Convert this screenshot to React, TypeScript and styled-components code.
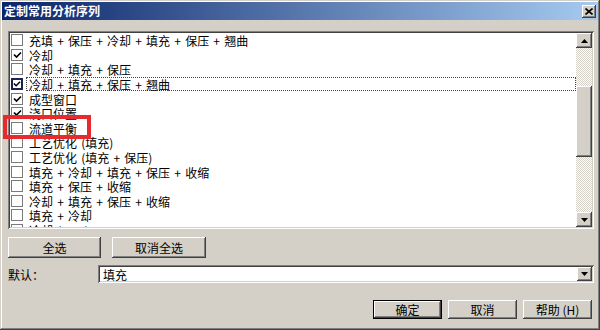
import React from "react";
import styled, { createGlobalStyle } from "styled-components";

const Global = createGlobalStyle`
  html, body { margin: 0; padding: 0; background: #d4d0c8; }
  body {
    font-family: "Noto Sans CJK SC", "Liberation Sans", sans-serif;
    font-size: 12px;
    color: #000;
  }
  * { box-sizing: border-box; }
`;

const raised =
  "inset -1px -1px #404040, inset 1px 1px #ffffff, inset -2px -2px #808080, inset 2px 2px #d4d0c8";
const sunken =
  "inset 1px 1px #808080, inset -1px -1px #ffffff, inset 2px 2px #404040, inset -2px -2px #d4d0c8";

const Window = styled.div`
  position: relative;
  width: 600px;
  height: 330px;
  background: #d4d0c8;
  padding: 2px;
  box-shadow: inset -1px -1px #404040, inset 1px 1px #d4d0c8,
    inset -2px -2px #808080, inset 2px 2px #ffffff;
  display: flex;
  flex-direction: column;
`;

const TitleBar = styled.div`
  height: 18px;
  flex: none;
  background: linear-gradient(to right, #0a246a, #a6caf0);
  display: flex;
  align-items: center;
  justify-content: space-between;
  padding: 0 2px 0 2px;
`;

const Title = styled.span`
  color: #ffffff;
  font-weight: bold;
  font-size: 12px;
  line-height: 18px;
`;

const CloseBtn = styled.div`
  width: 14px;
  height: 13px;
  background: #d4d0c8;
  box-shadow: ${raised};
  display: flex;
  align-items: center;
  justify-content: center;
`;

const Body = styled.div`
  flex: 1;
  display: flex;
  flex-direction: column;
  padding: 11px 4px 0 6px;
`;

const ListBox = styled.div`
  height: 198px;
  flex: none;
  display: flex;
  background: #ffffff;
  padding: 2px;
  box-shadow: ${sunken};
`;

const Items = styled.div`
  flex: 1;
  overflow: hidden;
  display: flex;
  flex-direction: column;
`;

const Row = styled.div`
  height: 14.6px;
  flex: none;
  display: flex;
  align-items: center;
`;

const Check = styled.span<{ $focus?: boolean }>`
  width: 12px;
  height: 12px;
  flex: none;
  margin-left: 1px;
  background: #ffffff;
  border: ${(p) => (p.$focus ? "2px solid #1a2350" : "1px solid #7a7a7a")};
  display: flex;
  align-items: center;
  justify-content: center;
`;

const Label = styled.span<{ $focus?: boolean }>`
  flex: 1;
  margin-left: 3px;
  height: 14px;
  padding-left: 2px;
  line-height: 13px;
  font-size: 12px;
  white-space: pre;
  word-spacing: 1.5px;
  border: 1px dotted ${(p) => (p.$focus ? "#444" : "transparent")};
`;

const ScrollBar = styled.div`
  width: 16px;
  flex: none;
  display: flex;
  flex-direction: column;
  background: repeating-conic-gradient(#d4d0c8 0 25%, #ffffff 0 50%) 0 0 / 2px 2px;
`;

const ScrollBtn = styled.div`
  height: 15px;
  flex: none;
  background: #d4d0c8;
  box-shadow: ${raised};
  display: flex;
  align-items: center;
  justify-content: center;
`;

const Track = styled.div`
  flex: 1;
  padding-top: 38px;
`;

const Thumb = styled.div`
  height: 71px;
  background: #d4d0c8;
  box-shadow: ${raised};
`;

const ButtonRow = styled.div`
  display: flex;
  gap: 11px;
  margin-top: 8px;
`;

const Btn = styled.div<{ $w: number; $h: number; $default?: boolean }>`
  width: ${(p) => p.$w}px;
  height: ${(p) => p.$h}px;
  background: #d4d0c8;
  box-shadow: ${(p) =>
    p.$default
      ? "inset 0 0 0 1px #000000, inset -2px -2px #404040, inset 2px 2px #ffffff, inset -3px -3px #808080"
      : raised};
  display: flex;
  align-items: center;
  justify-content: center;
  font-size: 12px;
  line-height: 1;
`;

const DefaultRow = styled.div`
  display: flex;
  align-items: center;
  margin-top: 7px;
`;

const FieldLabel = styled.span`
  width: 90px;
  flex: none;
  font-size: 12px;
`;

const Combo = styled.div`
  flex: 1;
  height: 18px;
  background: #ffffff;
  box-shadow: ${sunken};
  padding: 2px 2px 2px 5px;
  display: flex;
  align-items: center;
  justify-content: space-between;
  font-size: 12px;
`;

const DropBtn = styled.div`
  width: 15px;
  height: 14px;
  background: #d4d0c8;
  box-shadow: ${raised};
  display: flex;
  align-items: center;
  justify-content: center;
`;

const Footer = styled.div`
  display: flex;
  justify-content: flex-end;
  gap: 6px;
  margin-top: 17px;
  margin-right: 2px;
`;

const Annotation = styled.div`
  position: absolute;
  left: 3px;
  top: 115px;
  width: 88px;
  height: 24px;
  border: 4px solid #e62a2e;
  pointer-events: none;
`;

const ArrowUp = () => (
  <svg width="7" height="4" viewBox="0 0 7 4">
    <path d="M3.5 0 L7 4 L0 4 Z" fill="#000" />
  </svg>
);
const ArrowDown = () => (
  <svg width="7" height="4" viewBox="0 0 7 4">
    <path d="M0 0 L7 0 L3.5 4 Z" fill="#000" />
  </svg>
);

const CheckMark = () => (
  <svg width="9" height="8" viewBox="0 0 9 8">
    <path d="M1 3.5 L3.5 6 L8 1.5" stroke="#000" strokeWidth="1.7" fill="none" />
  </svg>
);

const CloseX = () => (
  <svg width="8" height="7" viewBox="0 0 8 7">
    <path d="M0.5 0.5 L7.5 6.5 M7.5 0.5 L0.5 6.5" stroke="#000" strokeWidth="1.6" />
  </svg>
);

const items: { text: string; checked: boolean; focus?: boolean }[] = [
  { text: "充填 + 保压 + 冷却 + 填充 + 保压 + 翘曲", checked: false },
  { text: "冷却", checked: true },
  { text: "冷却 + 填充 + 保压", checked: false },
  { text: "冷却 + 填充 + 保压 + 翘曲", checked: true, focus: true },
  { text: "成型窗口", checked: true },
  { text: "浇口位置", checked: true },
  { text: "流道平衡", checked: false },
  { text: "工艺优化 (填充)", checked: false },
  { text: "工艺优化 (填充 + 保压)", checked: false },
  { text: "填充 + 冷却 + 填充 + 保压 + 收缩", checked: false },
  { text: "填充 + 保压 + 收缩", checked: false },
  { text: "冷却 + 填充 + 保压 + 收缩", checked: false },
  { text: "填充 + 冷却", checked: false },
  { text: "冷却 (FEM)", checked: true },
];

export default function App() {
  return (
    <>
      <Global />
      <Window>
        <TitleBar>
          <Title>定制常用分析序列</Title>
          <CloseBtn>
            <CloseX />
          </CloseBtn>
        </TitleBar>
        <Body>
          <ListBox>
            <Items>
              {items.map((it, i) => (
                <Row key={i}>
                  <Check $focus={it.focus}>{it.checked && <CheckMark />}</Check>
                  <Label $focus={it.focus}>{it.text}</Label>
                </Row>
              ))}
            </Items>
            <ScrollBar>
              <ScrollBtn>
                <ArrowUp />
              </ScrollBtn>
              <Track>
                <Thumb />
              </Track>
              <ScrollBtn>
                <ArrowDown />
              </ScrollBtn>
            </ScrollBar>
          </ListBox>
          <ButtonRow>
            <Btn $w={93} $h={21}>全选</Btn>
            <Btn $w={94} $h={21}>取消全选</Btn>
          </ButtonRow>
          <DefaultRow>
            <FieldLabel>默认：</FieldLabel>
            <Combo>
              <span>填充</span>
              <DropBtn>
                <ArrowDown />
              </DropBtn>
            </Combo>
          </DefaultRow>
          <Footer>
            <Btn $w={69} $h={19} $default>确定</Btn>
            <Btn $w={69} $h={19}>取消</Btn>
            <Btn $w={69} $h={19}>帮助 (H)</Btn>
          </Footer>
        </Body>
        <Annotation />
      </Window>
    </>
  );
}
